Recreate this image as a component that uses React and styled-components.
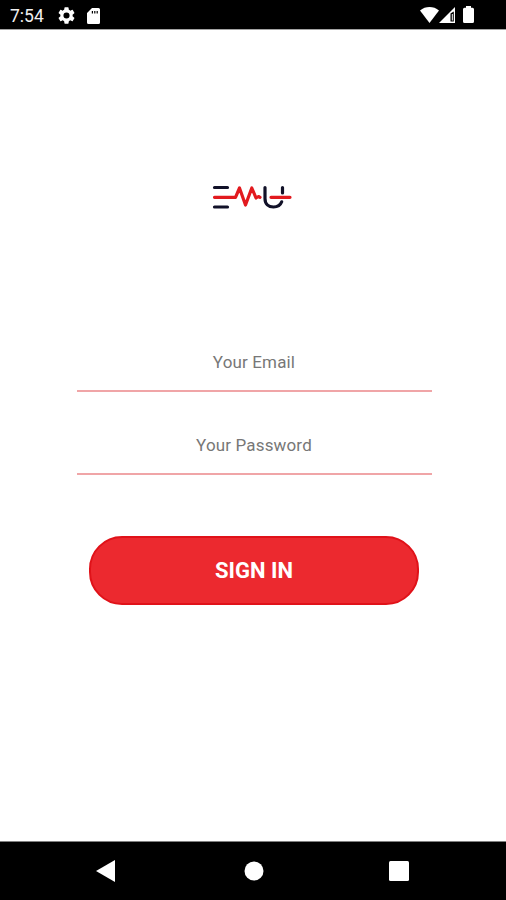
import styled, { createGlobalStyle } from "styled-components";

const GlobalStyle = createGlobalStyle`
  * {
    box-sizing: border-box;
  }

  body {
    margin: 0;
    background: #ffffff;
    font-family: Roboto, sans-serif;
  }
`;

const Screen = styled.div`
  display: flex;
  flex-direction: column;
  width: 100%;
  height: 100vh;
  overflow: hidden;
`;

const StatusBar = styled.header`
  display: flex;
  align-items: center;
  justify-content: space-between;
  height: 30px;
  padding: 2px 32px 0 10px;
  background: #000000;
  border-bottom: 1px solid #a3a3a3;
`;

const StatusGroup = styled.div`
  display: flex;
  align-items: center;
  padding-bottom: ${(props) => props.$lift || 0}px;
`;

const Clock = styled.span`
  width: 48px;
  font-size: 17.5px;
  line-height: 20px;
  color: #f0f0f0;
`;

const Icon = styled.svg`
  display: block;
  fill: #ffffff;
  margin-left: ${(props) => props.$gap || 0}px;
`;

const Content = styled.main`
  display: flex;
  flex: 1;
  flex-direction: column;
  align-items: center;
  padding-top: 150px;
`;

const Logo = styled.svg`
  display: block;
  margin-right: 2px;
  fill: none;
  stroke-width: 3.2;
  stroke-linecap: round;
  stroke-linejoin: round;
`;

const Form = styled.form`
  display: flex;
  flex-direction: column;
  align-items: center;
  width: 355px;
  margin: 119px 0 0 2px;
`;

const Field = styled.input`
  width: 100%;
  height: 59px;
  margin-bottom: 24px;
  padding: 0;
  border: 0;
  border-bottom: 2px solid #f0a5a7;
  border-radius: 0;
  outline: 0;
  background: transparent;
  font-family: inherit;
  font-size: 17px;
  letter-spacing: 0.15px;
  text-align: center;
  color: #333333;

  &::placeholder {
    color: #777777;
    opacity: 1;
  }
`;

const Button = styled.button`
  width: 330px;
  height: 69px;
  margin-top: 37px;
  padding: 0;
  border: 2px solid #e01219;
  border-radius: 33px;
  background: #ec292f;
  font-family: inherit;
  font-size: 22px;
  font-weight: 700;
  color: #ffffff;
`;

const NavBar = styled.nav`
  display: flex;
  align-items: center;
  justify-content: space-between;
  height: 59px;
  padding: 0 97px 0 96px;
  border-top: 1px solid #808080;
  background: #000000;
`;

export default function App() {
  return (
    <>
      <GlobalStyle />
      <Screen>
        <StatusBar>
          <StatusGroup>
            <Clock>7:54</Clock>
            <Icon width="17" height="17" viewBox="2 2 20 20">
              <path d="M19.14 12.94c.04-.3.06-.61.06-.94s-.02-.64-.07-.94l2.03-1.58a.49.49 0 0 0 .12-.61l-1.92-3.32a.49.49 0 0 0-.59-.22l-2.39.96a7 7 0 0 0-1.62-.94l-.36-2.54a.48.48 0 0 0-.48-.41h-3.84a.48.48 0 0 0-.47.41l-.36 2.54c-.59.24-1.13.57-1.62.94l-2.39-.96a.48.48 0 0 0-.59.22L2.74 8.87a.48.48 0 0 0 .12.61l2.03 1.58a6 6 0 0 0-.02 1.88l-2.03 1.58a.49.49 0 0 0-.12.61l1.92 3.32c.12.22.37.29.59.22l2.39-.96c.5.38 1.03.7 1.62.94l.36 2.54c.05.24.24.41.48.41h3.84c.24 0 .44-.17.47-.41l.36-2.54a7 7 0 0 0 1.62-.94l2.39.96c.22.08.47 0 .59-.22l1.92-3.32a.48.48 0 0 0-.12-.61zM12 15.6a3.6 3.6 0 1 1 0-7.2 3.6 3.6 0 0 1 0 7.2z" />
            </Icon>
            <Icon width="13" height="16" viewBox="0 0 13 16" $gap={12}>
              <path
                fillRule="evenodd"
                d="M5 0h6.500A1.500 1.500 0 0 1 13 1.500V14.500A1.500 1.500 0 0 1 11.500 16h-10A1.500 1.500 0 0 1 0 14.500V5zM4.800 3v2.500h1.200V3zM7.200 3v2.500h1.200V3zM9.600 3v2.500h1.200V3z"
              />
            </Icon>
          </StatusGroup>
          <StatusGroup $lift={2}>
            <Icon width="19" height="16" viewBox="0 0 19 16">
              <path d="M0 3.500C5.500-1.100 13.500-1.100 19 3.500L9.500 16z" />
            </Icon>
            <Icon width="16" height="16" viewBox="0 0 16 16">
              <path
                fillRule="evenodd"
                d="M16 0v16H0zM14.800 4.500l-3.300 2v8h3.300z"
              />
              <path d="M12.800 7h1v6.500h-1z" />
            </Icon>
            <Icon width="11" height="17" viewBox="0 0 11 17" $gap={8}>
              <path d="M3 0h5v1.800h1.500A1.500 1.500 0 0 1 11 3.300v12.200A1.500 1.500 0 0 1 9.500 17h-8A1.500 1.500 0 0 1 0 15.500V3.300a1.500 1.500 0 0 1 1.500-1.500H3z" />
            </Icon>
          </StatusGroup>
        </StatusBar>
        <Content>
          <Logo width="82" height="34" viewBox="0 0 82 34">
            <g stroke="#111128">
              <path d="M3.500 7.500H16.500M3.500 27H16.500" />
              <path d="M54 7.500V18.500C54 24 57.500 27 62.500 27C66.500 27 69.500 25 70.700 21.800M71.500 7.500V13" />
            </g>
            <path
              stroke="#e21a1f"
              d="M3.500 17.300H24.500L28.500 8L34.500 25L40.800 8L45 18L47.500 16.500L49 17.300M60 17.300H79"
            />
          </Logo>
          <Form>
            <Field type="email" placeholder="Your Email" />
            <Field type="password" placeholder="Your Password" />
            <Button type="button">SIGN IN</Button>
          </Form>
        </Content>
        <NavBar>
          <Icon width="19" height="22" viewBox="0 0 19 22">
            <path d="M19 0v22L0 11z" />
          </Icon>
          <Icon width="20" height="20" viewBox="0 0 20 20" $gap={3}>
            <circle cx="10" cy="10" r="9.500" />
          </Icon>
          <Icon width="20" height="20" viewBox="0 0 20 20">
            <rect width="20" height="20" rx="1.500" />
          </Icon>
        </NavBar>
      </Screen>
    </>
  );
}
